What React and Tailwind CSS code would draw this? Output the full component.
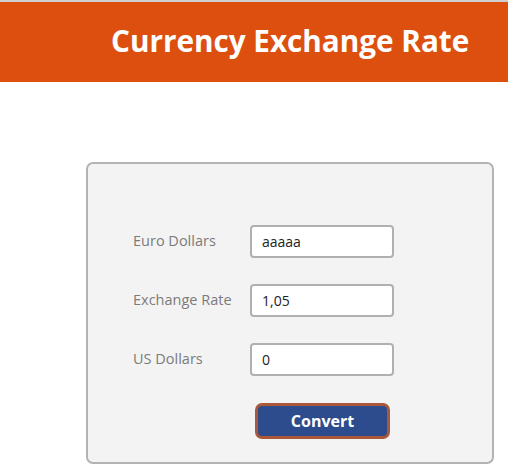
import React, { useState } from "react";

const font = { fontFamily: '"Open Sans", "Noto Sans", sans-serif' };

const Field = ({ label, value, onChange }) => (
  <div className="flex items-center h-[33px]">
    <label className="w-[117px] text-[14.5px] text-[#7b7b7b] -mt-[1px]">{label}</label>
    <input
      value={value}
      onChange={(e) => onChange(e.target.value)}
      className="w-[144px] h-[33px] bg-white border-2 border-[#b0b0b0] rounded-[4px] px-[10px] text-[14px] text-[#222] outline-none"
    />
  </div>
);

const App = () => {
  const [euro, setEuro] = useState("aaaaa");
  const [rate, setRate] = useState("1,05");
  const [usd, setUsd] = useState("0");

  const convert = () => {
    const e = parseFloat(String(euro).replace(",", "."));
    const r = parseFloat(String(rate).replace(",", "."));
    setUsd(isNaN(e * r) ? "0" : String(e * r));
  };

  return (
    <div className="min-h-screen bg-white" style={font}>
      <header className="h-[82px] bg-[#dd4f0f] border-t-2 border-[#cfcfcf] flex items-center pl-[111px]">
        <h1 className="text-[29.7px] font-bold text-white leading-none -mt-[2px]">Currency Exchange Rate</h1>
      </header>

      <div className="ml-[86px] mt-[80px] w-[408px] h-[302px] bg-[#f3f3f3] border-2 border-[#b3b3b3] rounded-[7px] pl-[45px] pt-[61px]">
        <div className="flex flex-col gap-[26px]">
          <Field label="Euro Dollars" value={euro} onChange={setEuro} />
          <Field label="Exchange Rate" value={rate} onChange={setRate} />
          <Field label="US Dollars" value={usd} onChange={setUsd} />
        </div>
        <button
          onClick={convert}
          className="ml-[122px] mt-[27px] w-[135px] h-[36px] bg-[#2c4c8d] border-[3px] border-[#a9593a] rounded-[7px] text-white text-[16px] font-bold"
        >
          Convert
        </button>
      </div>
    </div>
  );
};

export default App;
